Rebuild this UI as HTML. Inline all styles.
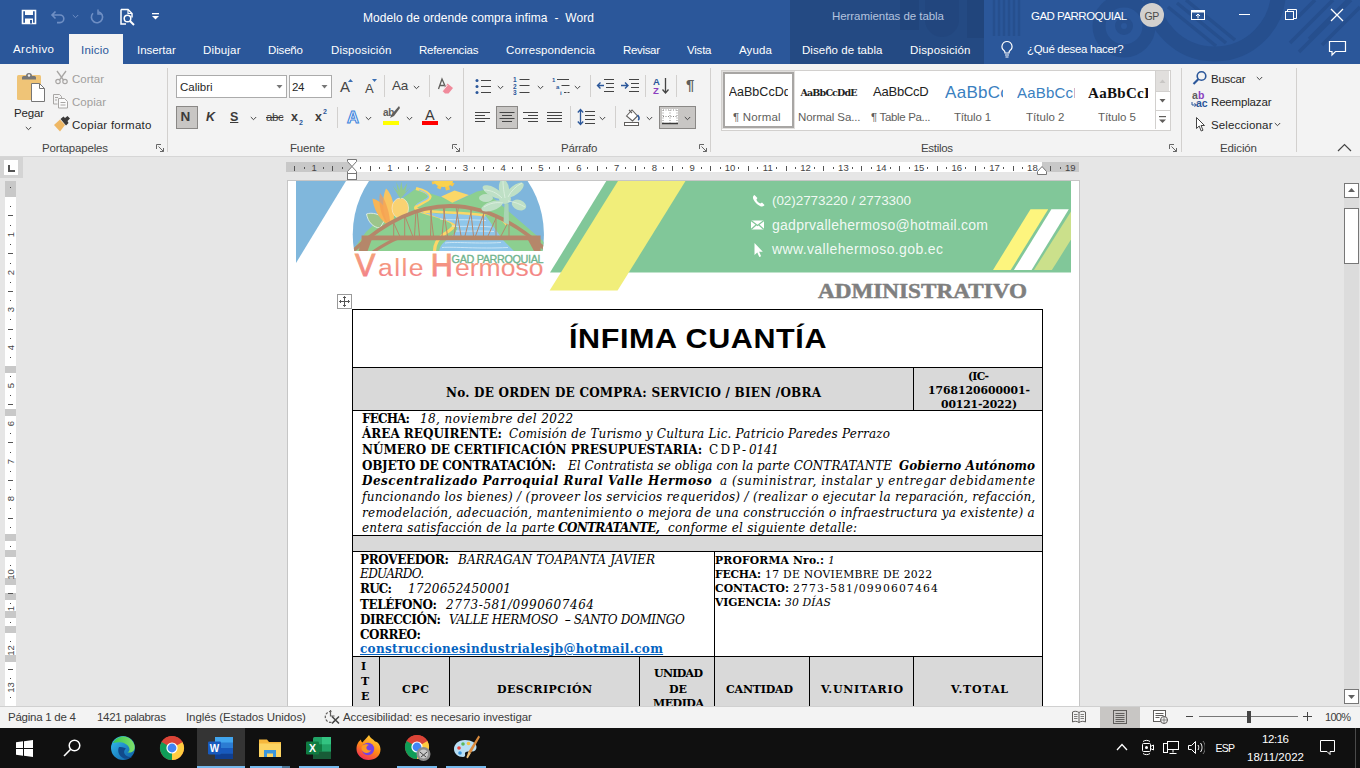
<!DOCTYPE html>
<html lang="es"><head><meta charset="utf-8"><title>Modelo de ordende compra infima - Word</title>
<style>
html,body{margin:0;padding:0;background:#e6e6e6;overflow:hidden}
#app{position:relative;width:1360px;height:768px;overflow:hidden;background:#e6e6e6;font-family:"Liberation Sans",sans-serif;font-size:12px;color:#262626}
#app div,#app span,#app svg{position:absolute;white-space:pre}
.t{line-height:16px;height:16px;font-size:11.5px}
.w{color:#fff}
.g{color:#a19f9d}
.sep{width:1px;background:#d2d0ce}
.chev{width:7px;height:5px}
.doc{font-family:"DejaVu Serif",serif;color:#000}
.doc b{font-weight:bold}
.ln{height:17px;line-height:17px;font-size:12px}
.sm{height:14px;line-height:14px;font-size:10.8px}
.bd{background:#000}
.rn{width:20px;text-align:center;font-size:9.5px;height:10px;line-height:10px;color:#444}
.vn{width:11px;height:11px;line-height:11px;text-align:center;font-size:9.5px;color:#444;transform:rotate(-90deg)}
</style></head><body><div id="app">
<!-- TITLE BAR -->
<div style="left:0;top:0;width:1360px;height:64px;background:#2b579a"></div>
<div style="left:790px;top:0;width:194px;height:64px;background:#244a83"></div>
<svg style="left:790px;top:0" width="570" height="64" viewBox="790 0 570 64">
 <g fill="#21457c"><rect x="900" y="0" width="19" height="30"/><rect x="967" y="0" width="17" height="38"/><path d="M925 0h34v20a17 17 0 0 1-34 0z" opacity=".6"/></g>
 <g stroke="#264f8e" stroke-width="2.500"><path d="M994 0v36M999 0v36M1004 0v36M1009 0v36M1014 0v36M1019 0v36"/></g>
 <g fill="none" stroke="#264f8e"><circle cx="1124" cy="26" r="25" stroke-width="13"/><circle cx="1124" cy="26" r="6" stroke-width="6"/><circle cx="1214.600" cy="-10" r="64" stroke-width="15"/></g>
 <g stroke="#264f8e" stroke-width="3.500"><path d="M1168 7l48 39M1177 3l49 40M1186 0l49 40M1290 43l43-43M1299 52l52-52M1309 39l39-39M1322 45l38-38M1297 18l18-18"/></g>
</svg>
<!-- quick access icons -->
<svg style="left:21px;top:9px" width="16" height="16" viewBox="0 0 16 16"><path d="M1.5 1.5h13v13h-13z" fill="none" stroke="#fff" stroke-width="1.6"/><rect x="4" y="1.5" width="8" height="4.5" fill="#fff"/><rect x="4" y="9.5" width="8" height="5" fill="#fff"/><rect x="9" y="11" width="2" height="3.5" fill="#2b579a"/></svg>
<svg style="left:50px;top:9px" width="16" height="16" viewBox="0 0 16 16"><path d="M5.5 2.5L2 6l3.500 3.500M2.500 6H10a3.800 3.800 0 0 1 0 7.600H7" fill="none" stroke="#6f8fc4" stroke-width="1.6"/></svg>
<svg class="chev" style="left:72px;top:14px" viewBox="0 0 7 5"><path d="M.8 1l2.700 2.700L6.200 1" fill="none" stroke="#6f8fc4" stroke-width="1"/></svg>
<svg style="left:89px;top:9px" width="16" height="16" viewBox="0 0 16 16"><path d="M9.300 2.700A5.600 5.600 0 1 1 4 4.200" fill="none" stroke="#6f8fc4" stroke-width="1.600"/><path d="M9 .5v4.500h4" fill="none" stroke="#6f8fc4" stroke-width="1.500"/></svg>
<svg style="left:119px;top:8px" width="18" height="18" viewBox="0 0 18 18"><path d="M2 1.500h7l4 4v4M2 1.500v14.500h5" fill="none" stroke="#fff" stroke-width="1.500"/><path d="M9 1.500v4h4" fill="none" stroke="#fff" stroke-width="1.200"/><circle cx="8.500" cy="10.500" r="3.300" fill="none" stroke="#fff" stroke-width="1.500"/><path d="M11 13l4 4" stroke="#fff" stroke-width="2"/></svg>
<svg style="left:151px;top:12px" width="9" height="9" viewBox="0 0 9 9"><rect x="1" y="1" width="7" height="1.300" fill="#fff"/><path d="M1 4h7L4.500 7.500z" fill="#fff"/></svg>
<div class="t w" style="left:363px;top:10px;font-size:12px;letter-spacing:0.08px">Modelo de ordende compra infima  -  Word</div>
<div class="t" style="left:832px;top:8px;color:#b4c3de;letter-spacing:-0.06px">Herramientas de tabla</div>
<div class="t w" style="left:1031px;top:8px;letter-spacing:-0.51px">GAD PARROQUIAL</div>
<div style="left:1140px;top:3px;width:24px;height:24px;border-radius:12px;background:#d2d0ce"></div>
<div class="t" style="left:1144.500px;top:7.500px;font-size:10.500px;color:#4a4a4a;letter-spacing:-.3px">GP</div>
<svg style="left:1190px;top:8px" width="16" height="14" viewBox="0 0 16 14"><rect x="1.500" y="2.500" width="13" height="9" fill="none" stroke="#fff" stroke-width="1"/><rect x="1.500" y="2.500" width="13" height="2" fill="#fff"/><path d="M8 10.500V6.500M6 8l2-2 2 2" fill="none" stroke="#fff" stroke-width="1"/></svg>
<div style="left:1239px;top:14px;width:11px;height:1px;background:#fff"></div>
<svg style="left:1285px;top:9px" width="12" height="12" viewBox="0 0 12 12"><rect x=".500" y="2.500" width="8" height="8" fill="none" stroke="#fff"/><path d="M2.500 2.500v-2h9v9h-3" fill="none" stroke="#fff"/></svg>
<svg style="left:1330px;top:8px" width="14" height="14" viewBox="0 0 14 14"><path d="M1 1l12 12M13 1L1 13" stroke="#fff" stroke-width="1.300"/></svg>
<!-- TABS -->
<div style="left:69px;top:34px;width:54px;height:30px;background:#f3f3f3"></div>
<div class="t w" style="left:13px;top:41px;letter-spacing:0.44px">Archivo</div>
<div class="t" style="left:81px;top:42px;color:#2b579a;letter-spacing:0.23px">Inicio</div>
<div class="t w" style="left:137px;top:42px;letter-spacing:-0.04px">Insertar</div>
<div class="t w" style="left:203px;top:42px;letter-spacing:0.18px">Dibujar</div>
<div class="t w" style="left:268px;top:42px;letter-spacing:-0.16px">Diseño</div>
<div class="t w" style="left:331px;top:42px;letter-spacing:0.17px">Disposición</div>
<div class="t w" style="left:419px;top:42px;letter-spacing:-0.19px">Referencias</div>
<div class="t w" style="left:506px;top:42px;letter-spacing:0.10px">Correspondencia</div>
<div class="t w" style="left:623px;top:42px;letter-spacing:-0.33px">Revisar</div>
<div class="t w" style="left:687px;top:42px;letter-spacing:-0.21px">Vista</div>
<div class="t w" style="left:739px;top:42px;letter-spacing:0.15px">Ayuda</div>
<div class="t w" style="left:802px;top:42px;letter-spacing:0.04px">Diseño de tabla</div>
<div class="t w" style="left:910px;top:42px;letter-spacing:0.17px">Disposición</div>
<svg style="left:999px;top:40px" width="16" height="19" viewBox="0 0 16 19"><path d="M8 1.500a5 5 0 0 0-3 9c.700.600 1 1.300 1 2.500h4c0-1.200.300-1.900 1-2.500a5 5 0 0 0-3-9z" fill="none" stroke="#fff" stroke-width="1.200"/><path d="M6 15h4M6.500 17h3" stroke="#fff" stroke-width="1.200"/></svg>
<div class="t w" style="left:1027px;top:41px;letter-spacing:-0.32px">¿Qué desea hacer?</div>
<svg style="left:1328px;top:40px" width="19" height="17" viewBox="0 0 19 17"><path d="M1.500 1.500h16v10h-10l-3.500 3.500v-3.500h-2.500z" fill="none" stroke="#fff" stroke-width="1.200"/></svg>
<!-- RIBBON -->
<div style="left:0;top:64px;width:1360px;height:92px;background:#f3f3f3"></div>
<div style="left:0;top:156px;width:1360px;height:1px;background:#d6d6d6"></div>
<!-- Clipboard -->
<svg style="left:16px;top:70px" width="30" height="34" viewBox="0 0 30 34"><rect x="1" y="5" width="24" height="25" rx="1.500" fill="#efc477"/><path d="M6 9.500V7.500a1.500 1.500 0 0 1 1.500-1.500h2.500a3 3 0 0 1 6 0h2.500a1.500 1.500 0 0 1 1.500 1.500v2z" fill="#767676"/><circle cx="13" cy="5.500" r="1.200" fill="#f3f3f3"/><path d="M15.500 13.500h8l5 5v13h-13z" fill="#fff" stroke="#767676" stroke-width="1"/><path d="M23.500 13.500v5h5" fill="none" stroke="#767676" stroke-width="1"/></svg>
<div class="t" style="left:14px;top:105px;letter-spacing:-0.17px">Pegar</div>
<svg class="chev" style="left:25px;top:126px" viewBox="0 0 7 5"><path d="M.8 1l2.700 2.700L6.200 1" fill="none" stroke="#444" stroke-width="1"/></svg>
<svg style="left:54px;top:70px" width="15" height="15" viewBox="0 0 15 15"><path d="M3 1l6.500 9M12 1L5.500 10" stroke="#a8a6a4" stroke-width="1.300" fill="none"/><circle cx="4" cy="11.500" r="2.200" fill="none" stroke="#a8a6a4" stroke-width="1.200"/><circle cx="11" cy="11.500" r="2.200" fill="none" stroke="#a8a6a4" stroke-width="1.200"/></svg>
<div class="t g" style="left:72px;top:71px;letter-spacing:0.01px">Cortar</div>
<svg style="left:52px;top:93px" width="17" height="16" viewBox="0 0 17 16"><path d="M1.500 1.500h6l2 2v1.500M1.500 1.500v9.500h4" fill="none" stroke="#a8a6a4" stroke-width="1"/><path d="M6.500 5.500h6l3 3v6.500h-9z" fill="#fbfbfb" stroke="#a8a6a4" stroke-width="1"/><path d="M8.500 9.500h5M8.500 12h5M3 4.500h3M3 7h2" stroke="#a8a6a4" stroke-width="1"/></svg>
<div class="t g" style="left:72px;top:94px;letter-spacing:0.02px">Copiar</div>
<svg style="left:53px;top:116px" width="18" height="16" viewBox="0 0 18 16"><path d="M1 9l6-5.500 5 5.500-5 6.500z" fill="#eeb764"/><path d="M7.500 3l3-2.500 1.500 1.500L14.500 0 17 2.500 14.500 5l1 2-2.500 2.500z" fill="#3b3a39"/></svg>
<div class="t" style="left:72px;top:117px;letter-spacing:0.26px">Copiar formato</div>
<div class="t" style="left:42px;top:140px;color:#444;letter-spacing:-0.16px">Portapapeles</div>
<svg style="left:156px;top:144px" width="9" height="9" viewBox="0 0 9 9"><path d="M.5 5V.5H5" fill="none" stroke="#666"/><path d="M2.500 2.500l5 5M7.500 4V7.500H4" fill="none" stroke="#666"/></svg>
<div class="sep" style="left:167px;top:68px;height:84px"></div>
<!-- Font -->
<div class="sep" style="left:337px;top:107px;height:21px"></div>
<div style="left:176px;top:75px;width:109px;height:21px;background:#fff;border:1px solid #ababab"></div>
<div class="t" style="left:180px;top:79px">Calibri</div>
<svg style="left:276px;top:85px" width="7" height="4" viewBox="0 0 7 4"><path d="M.5 0h6L3.500 3.500z" fill="#777"/></svg>
<div style="left:289px;top:75px;width:41px;height:21px;background:#fff;border:1px solid #ababab"></div>
<div class="t" style="left:292px;top:79px;letter-spacing:-.3px">24</div>
<svg style="left:321px;top:85px" width="7" height="4" viewBox="0 0 7 4"><path d="M.5 0h6L3.500 3.500z" fill="#777"/></svg>
<div class="t" style="left:340px;top:79px;font-size:15px;color:#444">A</div>
<svg style="left:348px;top:79px" width="5" height="3" viewBox="0 0 5 3"><path d="M0 3h5L2.500 0z" fill="#3a6fb5"/></svg>
<div class="t" style="left:365px;top:81px;font-size:13px;color:#444">A</div>
<svg style="left:372px;top:79px" width="5" height="3" viewBox="0 0 5 3"><path d="M0 0h5L2.500 3z" fill="#3a6fb5"/></svg>
<div class="sep" style="left:384px;top:75px;height:22px"></div>
<div class="t" style="left:392px;top:78px;font-size:13.500px;color:#444;letter-spacing:-.3px">Aa</div>
<svg class="chev" style="left:413px;top:85px" viewBox="0 0 7 5"><path d="M.8 1l2.700 2.700L6.200 1" fill="none" stroke="#444" stroke-width="1"/></svg>
<div class="sep" style="left:429px;top:75px;height:22px"></div>
<svg style="left:436px;top:77px" width="19" height="18" viewBox="0 0 19 18"><path d="M2.500 12L6 2l3.500 8M3.800 8.500H8" fill="none" stroke="#605e5c" stroke-width="1.300"/><path d="M11.500 6.500l5.500 4.500-4.500 5.500h-3.500l-2.500-2.500z" fill="#f08a9b"/><path d="M6.500 14l5-6" stroke="#fff" stroke-width=".8"/></svg>
<div style="left:176px;top:106px;width:20px;height:21px;background:#c8c6c4;border:1px solid #8a8886"></div>
<div class="t" style="left:180.500px;top:109px;font-weight:bold;font-size:13.500px;color:#3b3a39">N</div>
<div class="t" style="left:206px;top:109px;font-weight:bold;font-style:italic;font-size:12.500px;color:#3b3a39">K</div>
<div class="t" style="left:230px;top:109px;font-weight:bold;font-size:12.500px;color:#3b3a39;text-decoration:underline">S</div>
<svg class="chev" style="left:250px;top:116px" viewBox="0 0 7 5"><path d="M.8 1l2.700 2.700L6.200 1" fill="none" stroke="#444" stroke-width="1"/></svg>
<div class="t" style="left:266px;top:109px;font-size:11.500px;color:#3b3a39;text-decoration:line-through;letter-spacing:-.4px">abc</div>
<div class="t" style="left:291px;top:109px;font-weight:bold;font-size:12.500px;color:#3b3a39">x</div>
<div class="t" style="left:299px;top:115px;font-size:7px;color:#2b579a;font-weight:bold">2</div>
<div class="t" style="left:315px;top:109px;font-weight:bold;font-size:12.500px;color:#3b3a39">x</div>
<div class="t" style="left:323px;top:104px;font-size:7px;color:#2b579a;font-weight:bold">2</div>
<svg style="left:344px;top:107px" width="18" height="20" viewBox="0 0 18 20"><text x="9" y="16" text-anchor="middle" font-family="Liberation Sans,sans-serif" font-size="16.500" font-weight="bold" fill="#fff" stroke="#3f86dd" stroke-width="1.100" y="0">A</text></svg>
<svg class="chev" style="left:365px;top:116px" viewBox="0 0 7 5"><path d="M.8 1l2.700 2.700L6.200 1" fill="none" stroke="#444" stroke-width="1"/></svg>
<div class="t" style="left:383px;top:104.500px;font-size:10px;font-weight:bold;color:#605e5c;letter-spacing:-.3px">ab</div>
<svg style="left:389px;top:106px" width="11" height="13" viewBox="0 0 11 13"><path d="M10 0L3 8l-2 4 4-2 6-8z" fill="#605e5c"/></svg>
<div style="left:383px;top:121px;width:16px;height:4px;background:#ffff00"></div>
<svg class="chev" style="left:406px;top:116px" viewBox="0 0 7 5"><path d="M.8 1l2.700 2.700L6.200 1" fill="none" stroke="#444" stroke-width="1"/></svg>
<div class="t" style="left:425px;top:106.500px;font-size:14.500px;color:#3b3a39">A</div>
<div style="left:422px;top:121px;width:16px;height:4px;background:#ff0000"></div>
<svg class="chev" style="left:445px;top:116px" viewBox="0 0 7 5"><path d="M.8 1l2.700 2.700L6.200 1" fill="none" stroke="#444" stroke-width="1"/></svg>
<div class="t" style="left:290px;top:140px;color:#444;letter-spacing:-0.16px">Fuente</div>
<svg style="left:452px;top:144px" width="9" height="9" viewBox="0 0 9 9"><path d="M.5 5V.5H5" fill="none" stroke="#666"/><path d="M2.500 2.500l5 5M7.500 4V7.500H4" fill="none" stroke="#666"/></svg>
<div class="sep" style="left:463px;top:68px;height:84px"></div>
<!-- Paragraph -->
<svg style="left:475px;top:77px" width="17" height="18" viewBox="0 0 17 18"><g fill="#2b579a"><circle cx="2" cy="3.500" r="1.500"/><circle cx="2" cy="9.500" r="1.500"/><circle cx="2" cy="15.500" r="1.500"/></g><path d="M6 3.500h10M6 9.500h10M6 15.500h10" stroke="#444" stroke-width="1"/></svg>
<svg class="chev" style="left:497px;top:85px" viewBox="0 0 7 5"><path d="M.8 1l2.700 2.700L6.200 1" fill="none" stroke="#444" stroke-width="1"/></svg>
<svg style="left:513px;top:76px" width="18" height="20" viewBox="0 0 18 20"><g font-family="Liberation Sans,sans-serif" font-size="6.500" font-weight="bold" fill="#2b579a"><text x="0" y="6">1</text><text x="0" y="12.500">2</text><text x="0" y="19">3</text></g><path d="M6.500 3.500h10M6.500 9.500h10M6.500 16.500h10" stroke="#444" stroke-width="1"/></svg>
<svg class="chev" style="left:537px;top:85px" viewBox="0 0 7 5"><path d="M.8 1l2.700 2.700L6.200 1" fill="none" stroke="#444" stroke-width="1"/></svg>
<svg style="left:552px;top:76px" width="19" height="20" viewBox="0 0 19 20"><g font-family="Liberation Sans,sans-serif" font-size="6" font-weight="bold" fill="#2b579a"><text x="0" y="6">1</text><text x="4" y="12.500">a</text><text x="8" y="19">i</text></g><path d="M5 3.500h12M9.500 9.500h8M12 16.500h2.500M15.500 16.500h2" stroke="#444" stroke-width="1"/></svg>
<svg class="chev" style="left:574px;top:85px" viewBox="0 0 7 5"><path d="M.8 1l2.700 2.700L6.200 1" fill="none" stroke="#444" stroke-width="1"/></svg>
<div class="sep" style="left:590px;top:75px;height:22px"></div>
<svg style="left:596px;top:78px" width="18" height="16" viewBox="0 0 18 16"><path d="M8 1.500h10M10 5.500h8M10 9.500h8M8 13.500h10" stroke="#444" stroke-width="1"/><path d="M8 7.500H1.500M4.500 4.500l-3 3 3 3" fill="none" stroke="#2b579a" stroke-width="1.400"/></svg>
<svg style="left:621px;top:78px" width="18" height="16" viewBox="0 0 18 16"><path d="M8 1.500h10M10 5.500h8M10 9.500h8M8 13.500h10" stroke="#444" stroke-width="1"/><path d="M0 7.500h7M4 4.500l3 3-3 3" fill="none" stroke="#2b579a" stroke-width="1.400"/></svg>
<div class="sep" style="left:645px;top:75px;height:22px"></div>
<svg style="left:653px;top:76px" width="18" height="20" viewBox="0 0 18 20"><g font-family="Liberation Sans,sans-serif" font-size="9.500" font-weight="bold"><text x="0" y="8.500" fill="#2b579a">A</text><text x="0" y="18" fill="#8b3fc0">Z</text></g><path d="M12.500 2v15M9.500 13.500l3 3.500 3-3.500" fill="none" stroke="#444" stroke-width="1.300"/></svg>
<div class="sep" style="left:676px;top:75px;height:22px"></div>
<div class="t" style="left:686px;top:77px;font-size:15px;color:#605e5c;font-weight:bold">¶</div>
<svg style="left:475px;top:110px" width="16" height="14" viewBox="0 0 16 14"><path d="M0 2.500h15M0 5.500h10M0 8.500h15M0 11.500h10" stroke="#444" stroke-width="1"/></svg>
<div style="left:496px;top:106px;width:20px;height:21px;background:#c8c6c4;border:1px solid #8a8886"></div>
<svg style="left:499px;top:110px" width="16" height="14" viewBox="0 0 16 14"><path d="M.5 2.500h15M3 5.500h10M.5 8.500h15M3 11.500h10" stroke="#444" stroke-width="1"/></svg>
<svg style="left:523px;top:110px" width="16" height="14" viewBox="0 0 16 14"><path d="M0 2.500h15M5 5.500h10M0 8.500h15M5 11.500h10" stroke="#444" stroke-width="1"/></svg>
<svg style="left:547px;top:110px" width="16" height="14" viewBox="0 0 16 14"><path d="M0 2.500h15M0 5.500h15M0 8.500h15M0 11.500h15" stroke="#444" stroke-width="1"/></svg>
<div class="sep" style="left:570px;top:106px;height:22px"></div>
<svg style="left:577px;top:108px" width="18" height="18" viewBox="0 0 18 18"><path d="M8 3.500h10M8 7.500h10M8 11.500h10M8 15.500h10" stroke="#444" stroke-width="1"/><path d="M3.500 1.500v15M.8 4.500l2.700-3 2.700 3M.8 13.500l2.700 3 2.700-3" fill="none" stroke="#2b579a" stroke-width="1.300"/></svg>
<svg class="chev" style="left:599px;top:116px" viewBox="0 0 7 5"><path d="M.8 1l2.700 2.700L6.200 1" fill="none" stroke="#444" stroke-width="1"/></svg>
<div class="sep" style="left:615px;top:106px;height:22px"></div>
<svg style="left:623px;top:107px" width="19" height="20" viewBox="0 0 19 20"><path d="M3.500 9l5.500-6 5.500 6-5 5z" fill="#fff" stroke="#605e5c" stroke-width="1.100"/><path d="M6 3l3 3" stroke="#605e5c" stroke-width="1.100"/><path d="M14.500 8c2 2 2 4.500.500 5" fill="none" stroke="#2b579a" stroke-width="1.600"/><rect x="1.500" y="15.500" width="14" height="3" fill="#fff" stroke="#605e5c" stroke-width="1"/></svg>
<svg class="chev" style="left:646px;top:116px" viewBox="0 0 7 5"><path d="M.8 1l2.700 2.700L6.200 1" fill="none" stroke="#444" stroke-width="1"/></svg>
<div style="left:659px;top:106px;width:35px;height:21px;background:#c8c6c4;border:1px solid #8a8886"></div>
<svg style="left:662px;top:109px" width="16" height="16" viewBox="0 0 16 16"><rect x="0" y="0" width="16" height="14" fill="#fff"/><path d="M1 1h14M1 1v13M15 1v13M8 1v13M1 7.500h14" stroke="#8a8886" stroke-width="1" stroke-dasharray="1 1.500"/><path d="M0 14.500h16" stroke="#3b3a39" stroke-width="1.500"/></svg>
<svg class="chev" style="left:684px;top:116px" viewBox="0 0 7 5"><path d="M.8 1l2.700 2.700L6.200 1" fill="none" stroke="#444" stroke-width="1"/></svg>
<div class="t" style="left:561px;top:140px;color:#444;letter-spacing:-0.20px">Párrafo</div>
<svg style="left:699px;top:144px" width="9" height="9" viewBox="0 0 9 9"><path d="M.5 5V.5H5" fill="none" stroke="#666"/><path d="M2.500 2.500l5 5M7.500 4V7.500H4" fill="none" stroke="#666"/></svg>
<div class="sep" style="left:710px;top:68px;height:84px"></div>
<!-- Styles -->
<div style="left:721px;top:70px;width:448px;height:59px;background:#fff;border:1px solid #d2d0ce"></div>
<div style="left:723px;top:72px;width:67px;height:52px;border:2px solid #a8a6a4;outline:1px solid #e1dfdd"></div>
<div class="t" style="left:728.700px;top:84px;font-size:12.500px;color:#222;width:59px;overflow:hidden;letter-spacing:0.02px">AaBbCcDd</div>
<div class="t doc" style="left:800.500px;top:85px;font-size:9.500px;font-weight:bold;color:#222;letter-spacing:-0.83px">AaBbCcDdE</div>
<div class="t" style="left:873px;top:84px;font-size:13px;color:#222;letter-spacing:-0.23px">AaBbCcD</div>
<div class="t" style="left:945px;top:83px;font-size:17px;color:#3a80c0;width:58px;overflow:hidden;height:20px;line-height:20px;letter-spacing:.3px">AaBbCc</div>
<div class="t" style="left:1017px;top:83px;font-size:15px;color:#3a80c0;width:58px;overflow:hidden;height:20px;line-height:20px;letter-spacing:.2px">AaBbCcD</div>
<div class="t" style="left:1088px;top:83px;font-size:15px;color:#111;font-family:'Liberation Serif',serif;font-weight:bold;width:60px;overflow:hidden;height:20px;line-height:20px;letter-spacing:.3px">AaBbCcI</div>
<div class="t" style="left:733px;top:109px;color:#605e5c;letter-spacing:0.15px">¶ Normal</div>
<div class="t" style="left:798px;top:109px;color:#605e5c;letter-spacing:-0.13px">Normal Sa...</div>
<div class="t" style="left:871px;top:109px;color:#605e5c;letter-spacing:-0.33px">¶ Table Pa...</div>
<div class="t" style="left:954px;top:109px;color:#605e5c;letter-spacing:-0.19px">Título 1</div>
<div class="t" style="left:1026px;top:109px;color:#605e5c;letter-spacing:0.02px">Título 2</div>
<div class="t" style="left:1098px;top:109px;color:#605e5c;letter-spacing:-0.08px">Título 5</div>
<div style="left:1155px;top:71px;width:14px;height:20px;background:#e1dfdd"></div>
<div style="left:1155px;top:71px;width:1px;height:58px;background:#d2d0ce"></div>
<div style="left:1155px;top:91px;width:15px;height:1px;background:#d2d0ce"></div>
<div style="left:1155px;top:110px;width:15px;height:1px;background:#d2d0ce"></div>
<svg style="left:1159px;top:79px" width="7" height="4" viewBox="0 0 7 4"><path d="M.5 4h6L3.500 .500z" fill="#c8c6c4"/></svg>
<svg style="left:1159px;top:99px" width="7" height="4" viewBox="0 0 7 4"><path d="M.5 0h6L3.500 3.500z" fill="#605e5c"/></svg>
<svg style="left:1158px;top:116px" width="9" height="8" viewBox="0 0 9 8"><rect x="1" y="0" width="7" height="1.200" fill="#605e5c"/><path d="M1 3.500h7L4.500 7z" fill="#605e5c"/></svg>
<div class="t" style="left:921px;top:140px;color:#444;letter-spacing:-0.31px">Estilos</div>
<svg style="left:1169px;top:144px" width="9" height="9" viewBox="0 0 9 9"><path d="M.5 5V.5H5" fill="none" stroke="#666"/><path d="M2.500 2.500l5 5M7.500 4V7.500H4" fill="none" stroke="#666"/></svg>
<div class="sep" style="left:1181px;top:68px;height:84px"></div>
<!-- Editing -->
<svg style="left:1192px;top:70px" width="16" height="16" viewBox="0 0 16 16"><circle cx="9.500" cy="6" r="4.300" fill="none" stroke="#2b579a" stroke-width="1.600"/><path d="M6.500 9L1.500 14" stroke="#2b579a" stroke-width="2.200"/></svg>
<div class="t" style="left:1211px;top:71px;letter-spacing:-0.26px">Buscar</div>
<svg class="chev" style="left:1256px;top:76px" viewBox="0 0 7 5"><path d="M.8 1l2.700 2.700L6.200 1" fill="none" stroke="#444" stroke-width="1"/></svg>
<div class="t" style="left:1192px;top:90px;font-size:10.500px;font-weight:bold;color:#605e5c;height:11px;line-height:11px">a</div>
<div class="t" style="left:1198px;top:90px;font-size:10.500px;font-weight:bold;color:#8b3fc0;height:11px;line-height:11px">b</div>
<div class="t" style="left:1196px;top:98px;font-size:10.500px;font-weight:bold;color:#2b579a;height:11px;line-height:11px;letter-spacing:-.2px">ac</div>
<svg style="left:1191px;top:102px" width="6" height="6" viewBox="0 0 6 6"><path d="M1 0v3h4M3.500 1.200l1.800 1.800-1.800 1.800" fill="none" stroke="#2b579a" stroke-width="1"/></svg>
<div class="t" style="left:1211px;top:94px;letter-spacing:-0.17px">Reemplazar</div>
<svg style="left:1195px;top:116px" width="11" height="17" viewBox="0 0 11 17"><path d="M1.500 1.500v11l2.700-2.500 2 5 1.800-.800-2-4.700h3.500z" fill="#fff" stroke="#444" stroke-width="1"/></svg>
<div class="t" style="left:1211px;top:117px;letter-spacing:0.14px">Seleccionar</div>
<svg class="chev" style="left:1274px;top:122px" viewBox="0 0 7 5"><path d="M.8 1l2.700 2.700L6.200 1" fill="none" stroke="#444" stroke-width="1"/></svg>
<div class="t" style="left:1220px;top:140px;color:#444;letter-spacing:-0.12px">Edición</div>
<div class="sep" style="left:1296px;top:68px;height:84px"></div>
<svg style="left:1337px;top:143px" width="15" height="9" viewBox="0 0 15 9"><path d="M1 8l6.500-6.500L14 8" fill="none" stroke="#444" stroke-width="1.200"/></svg>
<!-- RULERS -->
<div style="left:0;top:157px;width:23px;height:21px;background:#d4d4d4"></div>
<div style="left:4px;top:160px;width:14px;height:15px;background:#fff"></div>
<div style="left:8px;top:165px;width:2px;height:6px;background:#555"></div><div style="left:8px;top:170px;width:7px;height:2px;background:#555"></div>
<div style="left:286px;top:162px;width:793px;height:10px;background:#c8c8c8"></div>
<div style="left:352px;top:162px;width:690px;height:10px;background:#fff"></div>
<div style="left:294px;top:166px;width:1px;height:5px;background:#555"></div>
<div style="left:304px;top:167px;width:1px;height:2px;background:#555"></div>
<div class="rn" style="left:304.2px;top:163px">1</div>
<div style="left:323px;top:167px;width:1px;height:2px;background:#555"></div>
<div style="left:332px;top:166px;width:1px;height:5px;background:#555"></div>
<div style="left:342px;top:167px;width:1px;height:2px;background:#555"></div>
<div style="left:360px;top:167px;width:1px;height:2px;background:#555"></div>
<div style="left:370px;top:166px;width:1px;height:5px;background:#555"></div>
<div style="left:379px;top:167px;width:1px;height:2px;background:#555"></div>
<div class="rn" style="left:379.8px;top:163px">1</div>
<div style="left:398px;top:167px;width:1px;height:2px;background:#555"></div>
<div style="left:408px;top:166px;width:1px;height:5px;background:#555"></div>
<div style="left:417px;top:167px;width:1px;height:2px;background:#555"></div>
<div class="rn" style="left:417.6px;top:163px">2</div>
<div style="left:436px;top:167px;width:1px;height:2px;background:#555"></div>
<div style="left:445px;top:166px;width:1px;height:5px;background:#555"></div>
<div style="left:455px;top:167px;width:1px;height:2px;background:#555"></div>
<div class="rn" style="left:455.4px;top:163px">3</div>
<div style="left:474px;top:167px;width:1px;height:2px;background:#555"></div>
<div style="left:483px;top:166px;width:1px;height:5px;background:#555"></div>
<div style="left:493px;top:167px;width:1px;height:2px;background:#555"></div>
<div class="rn" style="left:493.2px;top:163px">4</div>
<div style="left:512px;top:167px;width:1px;height:2px;background:#555"></div>
<div style="left:521px;top:166px;width:1px;height:5px;background:#555"></div>
<div style="left:531px;top:167px;width:1px;height:2px;background:#555"></div>
<div class="rn" style="left:531px;top:163px">5</div>
<div style="left:549px;top:167px;width:1px;height:2px;background:#555"></div>
<div style="left:559px;top:166px;width:1px;height:5px;background:#555"></div>
<div style="left:568px;top:167px;width:1px;height:2px;background:#555"></div>
<div class="rn" style="left:568.8px;top:163px">6</div>
<div style="left:587px;top:167px;width:1px;height:2px;background:#555"></div>
<div style="left:597px;top:166px;width:1px;height:5px;background:#555"></div>
<div style="left:606px;top:167px;width:1px;height:2px;background:#555"></div>
<div class="rn" style="left:606.6px;top:163px">7</div>
<div style="left:625px;top:167px;width:1px;height:2px;background:#555"></div>
<div style="left:635px;top:166px;width:1px;height:5px;background:#555"></div>
<div style="left:644px;top:167px;width:1px;height:2px;background:#555"></div>
<div class="rn" style="left:644.4px;top:163px">8</div>
<div style="left:663px;top:167px;width:1px;height:2px;background:#555"></div>
<div style="left:672px;top:166px;width:1px;height:5px;background:#555"></div>
<div style="left:682px;top:167px;width:1px;height:2px;background:#555"></div>
<div class="rn" style="left:682.2px;top:163px">9</div>
<div style="left:701px;top:167px;width:1px;height:2px;background:#555"></div>
<div style="left:710px;top:166px;width:1px;height:5px;background:#555"></div>
<div style="left:720px;top:167px;width:1px;height:2px;background:#555"></div>
<div class="rn" style="left:720px;top:163px">10</div>
<div style="left:738px;top:167px;width:1px;height:2px;background:#555"></div>
<div style="left:748px;top:166px;width:1px;height:5px;background:#555"></div>
<div style="left:757px;top:167px;width:1px;height:2px;background:#555"></div>
<div class="rn" style="left:757.8px;top:163px">11</div>
<div style="left:776px;top:167px;width:1px;height:2px;background:#555"></div>
<div style="left:786px;top:166px;width:1px;height:5px;background:#555"></div>
<div style="left:795px;top:167px;width:1px;height:2px;background:#555"></div>
<div class="rn" style="left:795.6px;top:163px">12</div>
<div style="left:814px;top:167px;width:1px;height:2px;background:#555"></div>
<div style="left:823px;top:166px;width:1px;height:5px;background:#555"></div>
<div style="left:833px;top:167px;width:1px;height:2px;background:#555"></div>
<div class="rn" style="left:833.4px;top:163px">13</div>
<div style="left:852px;top:167px;width:1px;height:2px;background:#555"></div>
<div style="left:861px;top:166px;width:1px;height:5px;background:#555"></div>
<div style="left:871px;top:167px;width:1px;height:2px;background:#555"></div>
<div class="rn" style="left:871.2px;top:163px">14</div>
<div style="left:890px;top:167px;width:1px;height:2px;background:#555"></div>
<div style="left:899px;top:166px;width:1px;height:5px;background:#555"></div>
<div style="left:909px;top:167px;width:1px;height:2px;background:#555"></div>
<div class="rn" style="left:909px;top:163px">15</div>
<div style="left:927px;top:167px;width:1px;height:2px;background:#555"></div>
<div style="left:937px;top:166px;width:1px;height:5px;background:#555"></div>
<div style="left:946px;top:167px;width:1px;height:2px;background:#555"></div>
<div class="rn" style="left:946.8px;top:163px">16</div>
<div style="left:965px;top:167px;width:1px;height:2px;background:#555"></div>
<div style="left:975px;top:166px;width:1px;height:5px;background:#555"></div>
<div style="left:984px;top:167px;width:1px;height:2px;background:#555"></div>
<div class="rn" style="left:984.6px;top:163px">17</div>
<div style="left:1003px;top:167px;width:1px;height:2px;background:#555"></div>
<div style="left:1013px;top:166px;width:1px;height:5px;background:#555"></div>
<div style="left:1022px;top:167px;width:1px;height:2px;background:#555"></div>
<div class="rn" style="left:1022.4px;top:163px">18</div>
<div style="left:1041px;top:167px;width:1px;height:2px;background:#555"></div>
<div style="left:1050px;top:166px;width:1px;height:5px;background:#555"></div>
<div style="left:1060px;top:167px;width:1px;height:2px;background:#555"></div>
<div class="rn" style="left:1060.2px;top:163px">19</div>
<svg style="left:346px;top:158px" width="12" height="24" viewBox="0 0 12 24"><path d="M1.500 1.500h9v2l-4.500 5-4.500-5z" fill="#fff" stroke="#777" stroke-width="1"/><path d="M1.500 15.500v-2l4.500-5 4.500 5v2z" fill="#fff" stroke="#777" stroke-width="1"/><rect x="1.500" y="15.500" width="9" height="6" fill="#fff" stroke="#777"/></svg>
<svg style="left:1036px;top:162px" width="12" height="14" viewBox="0 0 12 14"><path d="M1.500 12.500v-3l4.500-5 4.500 5v3z" fill="#fff" stroke="#777" stroke-width="1"/></svg>
<div style="left:5px;top:181px;width:11px;height:525px;background:#fff"></div>
<div style="left:5px;top:181px;width:11px;height:16px;background:#c8c8c8"></div>
<div style="left:5px;top:366px;width:11px;height:7px;background:#c8c8c8"></div>
<div style="left:5px;top:409px;width:11px;height:7px;background:#c8c8c8"></div>
<div style="left:5px;top:534px;width:11px;height:7px;background:#c8c8c8"></div>
<div style="left:5px;top:550px;width:11px;height:7px;background:#c8c8c8"></div>
<div style="left:5px;top:578px;width:11px;height:7px;background:#c8c8c8"></div>
<div style="left:5px;top:593px;width:11px;height:7px;background:#c8c8c8"></div>
<div style="left:5px;top:611px;width:11px;height:7px;background:#c8c8c8"></div>
<div style="left:5px;top:626px;width:11px;height:7px;background:#c8c8c8"></div>
<div style="left:5px;top:655px;width:11px;height:7px;background:#c8c8c8"></div>
<div style="left:10px;top:187px;width:1px;height:1px;background:#444"></div>
<div style="left:10px;top:206px;width:1px;height:1px;background:#444"></div>
<div style="left:8px;top:215px;width:5px;height:1px;background:#555"></div>
<div style="left:10px;top:225px;width:1px;height:1px;background:#444"></div>
<div class="vn" style="left:5px;top:228.8px">1</div>
<div style="left:10px;top:244px;width:1px;height:1px;background:#444"></div>
<div style="left:8px;top:253px;width:5px;height:1px;background:#555"></div>
<div style="left:10px;top:263px;width:1px;height:1px;background:#444"></div>
<div class="vn" style="left:5px;top:266.6px">2</div>
<div style="left:10px;top:282px;width:1px;height:1px;background:#444"></div>
<div style="left:8px;top:291px;width:5px;height:1px;background:#555"></div>
<div style="left:10px;top:300px;width:1px;height:1px;background:#444"></div>
<div class="vn" style="left:5px;top:304.4px">3</div>
<div style="left:10px;top:319px;width:1px;height:1px;background:#444"></div>
<div style="left:8px;top:329px;width:5px;height:1px;background:#555"></div>
<div style="left:10px;top:338px;width:1px;height:1px;background:#444"></div>
<div class="vn" style="left:5px;top:342.2px">4</div>
<div style="left:10px;top:357px;width:1px;height:1px;background:#444"></div>
<div style="left:10px;top:376px;width:1px;height:1px;background:#444"></div>
<div class="vn" style="left:5px;top:380px">5</div>
<div style="left:10px;top:395px;width:1px;height:1px;background:#444"></div>
<div style="left:8px;top:404px;width:5px;height:1px;background:#555"></div>
<div class="vn" style="left:5px;top:417.8px">6</div>
<div style="left:10px;top:433px;width:1px;height:1px;background:#444"></div>
<div style="left:8px;top:442px;width:5px;height:1px;background:#555"></div>
<div style="left:10px;top:452px;width:1px;height:1px;background:#444"></div>
<div class="vn" style="left:5px;top:455.6px">7</div>
<div style="left:10px;top:471px;width:1px;height:1px;background:#444"></div>
<div style="left:8px;top:480px;width:5px;height:1px;background:#555"></div>
<div style="left:10px;top:489px;width:1px;height:1px;background:#444"></div>
<div class="vn" style="left:5px;top:493.4px">8</div>
<div style="left:10px;top:508px;width:1px;height:1px;background:#444"></div>
<div style="left:8px;top:518px;width:5px;height:1px;background:#555"></div>
<div style="left:10px;top:527px;width:1px;height:1px;background:#444"></div>
<div style="left:10px;top:546px;width:1px;height:1px;background:#444"></div>
<div style="left:10px;top:565px;width:1px;height:1px;background:#444"></div>
<div class="vn" style="left:5px;top:569px">10</div>
<div style="left:8px;top:593px;width:5px;height:1px;background:#555"></div>
<div style="left:10px;top:603px;width:1px;height:1px;background:#444"></div>
<div class="vn" style="left:5px;top:603.3px">1</div>
<div style="left:10px;top:622px;width:1px;height:1px;background:#444"></div>
<div style="left:10px;top:641px;width:1px;height:1px;background:#444"></div>
<div class="vn" style="left:5px;top:644.6px">12</div>
<div style="left:8px;top:669px;width:5px;height:1px;background:#555"></div>
<div style="left:10px;top:678px;width:1px;height:1px;background:#444"></div>
<div class="vn" style="left:5px;top:682.4px">13</div>
<div style="left:10px;top:697px;width:1px;height:1px;background:#444"></div>
<!-- DOCUMENT -->
<div style="left:287px;top:180px;width:793px;height:527px;background:#c6c6c6"></div>
<div style="left:288px;top:181px;width:791px;height:525px;background:#fff"></div>
<svg style="left:288px;top:181px" width="791" height="125" viewBox="288 181 791 125">
 <defs>
  <clipPath id="dome"><path d="M369 181A95.900 95.900 0 0 0 354.200 251H542.500A95.900 95.900 0 0 0 527.600 181z"/></clipPath>
  <linearGradient id="vh" x1="0" y1="0" x2="0" y2="1"><stop offset="0" stop-color="#f6a878"/><stop offset="1" stop-color="#f27c8c"/></linearGradient>
 </defs>
 <path d="M296 181h50l-50 82z" fill="#80b7dc"/>
 <path d="M606.300 181H1071V272.600H550z" fill="#81c799"/>
 <path d="M618 181h67.500l-67.900 109.600h-68z" fill="#f1ee7a"/>
 <path d="M1030.500 209.200H1048.200L1010.700 270H993z" fill="#fdf57e"/>
 <path d="M1051.400 209.200H1068.800L1031.600 270H1013.900z" fill="#fff"/>
 <path d="M1071 211.500V239.600L1051.900 270H1034z" fill="#cbe08b"/>
 <g clip-path="url(#dome)">
  <rect x="350" y="181" width="200" height="70" fill="#7fb6dc"/>
  <path d="M350 254 366 232 400 200 416 188.500 441 197 455 202 477 191.500 484 190 543 241 550 254z" fill="#8ccf90"/>
  <path d="M441.200 196.600l13.300-6.100 14.400 4.400-16.600 7.800z" fill="#fbd768"/>
  <path d="M443.500 181l-3 8.500-3.500-1.500 2.500-7zM443.500 181l2.500 9.500 4-1-2.500-8.500zM443.500 181l9 5.500 2-3-7-3zM443.500 181l-11 3.500-1-3 8-1z" fill="#f9c74a"/>
  <path d="M434 181a9.500 6 0 0 0 19 0z" fill="#fbd24f"/>
  <path d="M416 188.500c6 1.500 13 4 14 8s-15 8-14.500 11.500 30 9 36 14-3 9-8 12.500-9 8-9 17" fill="none" stroke="#fbd768" stroke-width="3.200"/>
  <path d="M419 190c5 1.500 9 3.500 9.500 6.500s-9 5-12 8.500" fill="none" stroke="#8ec6ea" stroke-width="1.300"/>
  <path d="M421.500 212.500c12 1.500 40 1 64 3l18 25 14 14h-78.500c0-8 3-11 9-15.500s11-8 8.500-13-20-8-35-14.500z" fill="#8ec6ea"/>
  <path d="M423 210.500c14 2.500 40 1.500 62 5" fill="none" stroke="#fbd768" stroke-width="2.500"/>
  <path d="M485 213c10 2 18 6 22 12" fill="none" stroke="#fbd768" stroke-width="2.500"/>
  <path d="M445 243c10-1.500 32 1 56-.500M442 247.500c12-1 36 1.500 66 0M452 226c8 1 24-.500 40 1M456 231c8 .500 22-.500 38 .500M440 219c10 1.500 24 0 46 1.500" stroke="#d8ecf8" stroke-width=".8" fill="none"/>
  <path d="M366.500 214c5-2 14 0 18.500 5.500l-5 8.500c-7-.500-12-6-13.500-14z" fill="#9cc58b" stroke="#eef6ee" stroke-width=".8"/>
  <path d="M372.500 198.500c8 1.500 15 10 19 23l-6 2c-7-6-12-15-13-25z" fill="#f8b556"/>
  <path d="M386 188.500c6 5 9.500 18 7.500 32.500l-6 1.500c-5-9-6-24-1.500-34z" fill="#f9c560"/>
  <path d="M380 193c5 6 9 17 10 28l-4 1.500c-5-8-8-19-6-29.500z" fill="#f59d52" opacity=".7"/>
  <ellipse cx="400.300" cy="208.200" rx="8.300" ry="10.200" fill="#f9d272" stroke="#f6efe0" stroke-width=".6"/>
  <path d="M400.300 199l-7.500-13 5 5.500-1.500-9.500 3.500 8 1.500-8.500 1.500 8.500 4.500-7-2 9 5.500-5z" fill="#92c98e"/>
  <path d="M350 253.800Q450 158.200 550 253.800" fill="none" stroke="#b5876a" stroke-width="3.700"/>
  <path d="M370 254Q386 243 398 238" fill="none" stroke="#b5876a" stroke-width="3"/>
  <path d="M361.600 235.600h179v4.700h-179z" fill="#b5876a"/>
  <path d="M528 240l6 11h6.600v-11z" fill="#b5876a"/>
  <path d="M361.600 240l-3 11h9l4-11z" fill="#b5876a"/>
  <path d="M393.700 223v13M393.700 223l6 13M404.700 215.500v20.500M404.700 215.500l8 20.500M417 210.500l2.500 25.500M416 210.500l-1.500 25.500M430 207.500l3.500 28.500M431.500 207.500l-1 28.500M443 206l4.500 30M445 206l-3 30M456 206.500l5 29.500M458.500 206.500l-4.500 29.500M470.500 208.500l3 27.500M472 208.500l-7 27.500M483.500 211.500v24.500M484.500 211.500l-9 24.500M496 216v20M497 216l-9 20M508 222.500l-7 13.500M509 223v13" stroke="#b5876a" stroke-width="1" fill="none"/>
  <path d="M503.500 222.500l1-19 4 .300.500 21z" fill="#a9d5b4"/>
  <g fill="#bfe0c6"><ellipse cx="492" cy="206" rx="11" ry="4.500" transform="rotate(-18 492 206)"/><ellipse cx="493" cy="192" rx="11.500" ry="4.500" transform="rotate(28 493 192)"/><ellipse cx="504" cy="189" rx="5" ry="9.500" transform="rotate(-8 504 189)"/><ellipse cx="515" cy="190" rx="10.500" ry="4.500" transform="rotate(-38 515 190)"/><ellipse cx="519" cy="205" rx="7.500" ry="5" transform="rotate(22 519 205)"/><ellipse cx="486" cy="198" rx="7" ry="4"/><ellipse cx="505" cy="199" rx="6" ry="5"/></g>
  <g stroke="#e4f3e7" stroke-width=".7" fill="none"><path d="M484 207c6-4 12-5 19-4M484 190c7 0 13 3 18 8M503 181c0 6 1 11 2 17M522 183c-6 3-11 8-14 14M525 207c-5-3-10-5-17-6"/></g>
 </g>
 <g font-family="Liberation Sans,sans-serif" fill="url(#vh)">
 <text x="355" y="276" font-size="30.500" stroke="url(#vh)" stroke-width=".9">V</text>
 <text transform="translate(378 276) scale(1.13 1)" font-size="23.500" textLength="40.300" lengthAdjust="spacing">alle</text>
 <text x="430.800" y="276" font-size="30.500" stroke="url(#vh)" stroke-width=".9">H</text>
 <text transform="translate(455 276) scale(1.13 1)" font-size="23.500" textLength="78.300" lengthAdjust="spacing">ermoso</text>
 </g>
 <text x="451.600" y="263" font-family="Liberation Sans,sans-serif" font-size="10.800" fill="#6fb48e" stroke="#6fb48e" stroke-width=".35" textLength="92" lengthAdjust="spacing">GAD PARROQUIAL</text>
 <path d="M754.500 195c-1.500 1-2 2.500-1 4.500 1.500 3 3.500 5 6.500 6.500 2 1 3.500.500 4.500-1l-2.500-2.500-1.800 1c-1.800-.800-3-2-3.800-3.800l1-1.800z" fill="#fff"/>
 <path d="M751 220.500h13v9h-13z" fill="#fff"/><path d="M751 220.500l6.500 5 6.500-5M751 229.500l5-4.500M764 229.500l-5-4.500" stroke="#81c799" stroke-width="1.200" fill="none"/>
 <path d="M754.500 243v12l2.800-2.500 2 4.500 1.800-.800-2-4.400h3.700z" fill="#fff"/>
 <g font-family="Liberation Sans,sans-serif" fill="#fff" fill-opacity=".9" font-size="13.500"><text x="772" y="205" textLength="139" lengthAdjust="spacing">(02)2773220 / 2773300</text><text x="772" y="229.500" textLength="216" lengthAdjust="spacing" font-size="14">gadprvallehermoso@hotmail.com</text><text x="772" y="253.500" textLength="171" lengthAdjust="spacing" font-size="14">www.vallehermoso.gob.ec</text></g>
 <text x="818" y="297.500" font-family="Liberation Serif,serif" font-weight="bold" font-size="20.800" fill="#7f7f7f" stroke="#7f7f7f" stroke-width=".5" textLength="209" lengthAdjust="spacingAndGlyphs">ADMINISTRATIVO</text>
</svg>
<!-- table move handle -->
<div style="left:337px;top:294px;width:13px;height:13px;background:#fff;border:1px solid #9a9a9a"></div>
<svg style="left:339px;top:296px" width="11" height="11" viewBox="0 0 11 11"><path d="M5.500 .500v10M.500 5.500h10" stroke="#555" stroke-width="1"/><path d="M4 2l1.500-1.500L7 2M4 9l1.500 1.500L7 9M2 4L.500 5.500 2 7M9 4l1.500 1.500L9 7" fill="none" stroke="#555" stroke-width="1"/></svg>
<!-- table backgrounds -->
<div style="left:352px;top:367px;width:690px;height:43px;background:#d9d9d9"></div>
<div style="left:352px;top:535px;width:690px;height:16px;background:#d9d9d9"></div>
<div style="left:352px;top:656px;width:690px;height:50px;background:#d9d9d9"></div>
<!-- table borders -->
<div class="bd" style="left:352px;top:309px;width:691px;height:1px"></div>
<div class="bd" style="left:352px;top:367px;width:691px;height:1px"></div>
<div class="bd" style="left:352px;top:410px;width:691px;height:1px"></div>
<div class="bd" style="left:352px;top:535px;width:691px;height:1px"></div>
<div class="bd" style="left:352px;top:551px;width:691px;height:1px"></div>
<div class="bd" style="left:352px;top:656px;width:691px;height:1px"></div>
<div class="bd" style="left:352px;top:309px;width:1px;height:397px"></div>
<div class="bd" style="left:1042px;top:309px;width:1px;height:397px"></div>
<div class="bd" style="left:913px;top:367px;width:1px;height:43px"></div>
<div class="bd" style="left:714px;top:551px;width:1px;height:155px"></div>
<div class="bd" style="left:379px;top:656px;width:1px;height:50px"></div>
<div class="bd" style="left:449px;top:656px;width:1px;height:50px"></div>
<div class="bd" style="left:639px;top:656px;width:1px;height:50px"></div>
<div class="bd" style="left:809px;top:656px;width:1px;height:50px"></div>
<div class="bd" style="left:913px;top:656px;width:1px;height:50px"></div>
<!-- table text -->
<div style="left:569px;top:321px;height:36px;line-height:36px;font-size:28px;font-weight:bold;color:#000;transform-origin:0 0;transform:scaleX(1.09);letter-spacing:0.54px">ÍNFIMA CUANTÍA</div>
<div class="doc ln" style="left:446px;top:384.6px;font-weight:bold;letter-spacing:0.23px">No. DE ORDEN DE COMPRA: SERVICIO / BIEN /OBRA</div>
<div class="doc sm" style="left:968px;top:369.500px;font-weight:bold;letter-spacing:-0.74px">(IC-</div>
<div class="doc sm" style="left:928px;top:383.500px;font-weight:bold;letter-spacing:-0.01px">1768120600001-</div>
<div class="doc sm" style="left:941px;top:398px;font-weight:bold;letter-spacing:-0.12px">00121-2022)</div>
<!-- row 3 -->
<div class="doc ln" style="left:362px;top:410.500px;letter-spacing:-0.86px"><b>FECHA:</b></div>
<div class="doc ln" style="left:420px;top:410.500px;letter-spacing:0.42px"><i>18, noviembre del 2022</i></div>
<div class="doc ln" style="left:362px;top:426px;letter-spacing:-0.01px"><b>ÁREA REQUIRENTE:</b></div>
<div class="doc ln" style="left:509px;top:426px;letter-spacing:0.20px"><i>Comisión de Turismo y Cultura Lic. Patricio Paredes Perrazo</i></div>
<div class="doc ln" style="left:362px;top:441.500px;letter-spacing:-0.01px"><b>NÚMERO DE CERTIFICACIÓN PRESUPUESTARIA:</b></div>
<div class="doc ln" style="left:709px;top:441.500px;letter-spacing:2.24px">CDP-</div>
<div class="doc ln" style="left:749px;top:441.500px;letter-spacing:-0.18px"><i>0141</i></div>
<div class="doc ln" style="left:362px;top:457.500px;letter-spacing:-0.25px"><b>OBJETO DE CONTRATACIÓN:</b></div>
<div class="doc ln" style="left:568px;top:457.500px;letter-spacing:0.05px"><i>El Contratista se obliga con la parte CONTRATANTE</i></div>
<div class="doc ln" style="left:899px;top:457.500px;letter-spacing:0.06px"><b><i>Gobierno Autónomo</i></b></div>
<div class="doc ln" style="left:362px;top:473px;letter-spacing:0.51px"><b><i>Descentralizado Parroquial Rural Valle Hermoso</i></b></div>
<div class="doc ln" style="left:720px;top:473px;letter-spacing:0.56px"><i>a (suministrar, instalar y entregar debidamente</i></div>
<div class="doc ln" style="left:362px;top:488.500px;letter-spacing:0.29px"><i>funcionando los bienes) / (proveer los servicios requeridos) / (realizar o ejecutar la reparación, refacción,</i></div>
<div class="doc ln" style="left:362px;top:504.500px;letter-spacing:0.29px"><i>remodelación, adecuación, mantenimiento o mejora de una construcción o infraestructura ya existente) a</i></div>
<div class="doc ln" style="left:362px;top:520px;letter-spacing:0.26px"><i>entera satisfacción de la parte</i></div>
<div class="doc ln" style="left:558px;top:520px;letter-spacing:-0.67px"><b><i>CONTRATANTE,</i></b></div>
<div class="doc ln" style="left:668px;top:520px;letter-spacing:0.26px"><i>conforme el siguiente detalle:</i></div>
<!-- row 5 left -->
<div class="doc ln" style="left:360px;top:552.2px;letter-spacing:-0.35px"><b>PROVEEDOR:</b></div>
<div class="doc ln" style="left:458px;top:552.2px;letter-spacing:0.16px"><i>BARRAGAN TOAPANTA JAVIER</i></div>
<div class="doc ln" style="left:360px;top:566px;letter-spacing:-0.63px"><i>EDUARDO.</i></div>
<div class="doc ln" style="left:360px;top:581.3px;letter-spacing:-0.81px"><b>RUC:</b></div>
<div class="doc ln" style="left:408px;top:581.3px;letter-spacing:0.31px"><i>1720652450001</i></div>
<div class="doc ln" style="left:360px;top:596.5px;letter-spacing:-0.44px"><b>TELÉFONO:</b></div>
<div class="doc ln" style="left:446px;top:596.5px;letter-spacing:0.56px"><i>2773-581/0990607464</i></div>
<div class="doc ln" style="left:360px;top:611.5px;letter-spacing:-0.48px"><b>DIRECCIÓN:</b></div>
<div class="doc ln" style="left:449px;top:611.5px;letter-spacing:-0.36px"><i>VALLE HERMOSO  – SANTO DOMINGO</i></div>
<div class="doc ln" style="left:360px;top:627px;letter-spacing:-0.50px"><b>CORREO:</b></div>
<div class="doc ln" style="left:360px;top:641px;color:#0563c1;text-decoration:underline;letter-spacing:0.31px"><b>construccionesindustrialesjb@hotmail.com</b></div>
<!-- row 5 right -->
<div class="doc sm" style="left:715px;top:554.3px;letter-spacing:0.16px"><b>PROFORMA Nro.:</b></div>
<div class="doc sm" style="left:828px;top:554.3px"><i>1</i></div>
<div class="doc sm" style="left:715px;top:568.3px;letter-spacing:-0.21px"><b>FECHA:</b></div>
<div class="doc sm" style="left:765px;top:568.3px;letter-spacing:0.27px">17 DE NOVIEMBRE DE 2022</div>
<div class="doc sm" style="left:715px;top:582.3px;letter-spacing:0.04px"><b>CONTACTO:</b></div>
<div class="doc sm" style="left:793px;top:582.3px;letter-spacing:1.16px">2773-581/0990607464</div>
<div class="doc sm" style="left:715px;top:596.3px;letter-spacing:-0.10px"><b>VIGENCIA:</b></div>
<div class="doc sm" style="left:785px;top:596.3px;letter-spacing:0.12px"><i>30 DÍAS</i></div>
<!-- row 6 header -->
<div class="doc ln" style="font-size:11px;left:361px;top:657.8px"><b>I</b></div>
<div class="doc ln" style="font-size:11px;left:361px;top:672.8px"><b>T</b></div>
<div class="doc ln" style="font-size:11px;left:361px;top:687.8px"><b>E</b></div>
<div class="doc ln" style="font-size:11px;left:402px;top:681.3px;letter-spacing:0.61px"><b>CPC</b></div>
<div class="doc ln" style="font-size:11px;left:497px;top:681.3px;letter-spacing:0.43px"><b>DESCRIPCIÓN</b></div>
<div class="doc ln" style="font-size:11px;left:654px;top:664.8px;letter-spacing:-0.68px"><b>UNIDAD</b></div>
<div class="doc ln" style="font-size:11px;left:669px;top:681.3px;letter-spacing:0.06px"><b>DE</b></div>
<div class="doc ln" style="font-size:11px;left:653px;top:694.8px;letter-spacing:-0.47px"><b>MEDIDA</b></div>
<div class="doc ln" style="font-size:11px;left:726px;top:681.3px;letter-spacing:-0.19px"><b>CANTIDAD</b></div>
<div class="doc ln" style="font-size:11px;left:821px;top:681.3px;letter-spacing:0.75px"><b>V.UNITARIO</b></div>
<div class="doc ln" style="font-size:11px;left:951px;top:681.3px;letter-spacing:0.82px"><b>V.TOTAL</b></div>
<!-- area below doc clipped by status bar -->
<!-- scrollbar -->
<div style="left:1344px;top:183px;width:15px;height:521px;background:#dcdcdc"></div>
<div style="left:1344px;top:183px;width:15px;height:15px;background:#fff;border:1px solid #777;box-sizing:border-box"></div>
<svg style="left:1348px;top:188px" width="7" height="4" viewBox="0 0 7 4"><path d="M0 4h7L3.500 0z" fill="#606060"/></svg>
<div style="left:1344px;top:208px;width:15px;height:56px;background:#fff;border:1px solid #777;box-sizing:border-box"></div>
<div style="left:1344px;top:689px;width:15px;height:15px;background:#fff;border:1px solid #777;box-sizing:border-box"></div>
<svg style="left:1348px;top:695px" width="7" height="4" viewBox="0 0 7 4"><path d="M0 0h7L3.500 4z" fill="#606060"/></svg>
<!-- STATUS BAR -->
<div style="left:0;top:706px;width:1360px;height:22px;background:#f3f3f3"></div>
<div style="left:0;top:706px;width:1360px;height:1px;background:#d0d0d0"></div>
<div class="t" style="left:8px;top:709px;color:#3b3b3b;letter-spacing:-0.25px">Página 1 de 4</div>
<div class="t" style="left:97px;top:709px;color:#3b3b3b;letter-spacing:-0.33px">1421 palabras</div>
<div class="t" style="left:186px;top:709px;color:#3b3b3b;letter-spacing:-0.10px">Inglés (Estados Unidos)</div>
<svg style="left:323px;top:709px" width="17" height="16" viewBox="0 0 17 16"><path d="M8.500 2.500a5.500 5.500 0 1 0 3 9.500" fill="none" stroke="#605e5c" stroke-width="1.200" stroke-dasharray="2.500 1.500"/><path d="M7.500 1v6h4" fill="none" stroke="#605e5c" stroke-width="1.200"/><path d="M9 7.500l7 7M16 7.500l-7 7" stroke="#444" stroke-width="1.500"/></svg>
<div class="t" style="left:343px;top:709px;color:#3b3b3b;letter-spacing:-0.06px">Accesibilidad: es necesario investigar</div>
<svg style="left:1071px;top:710px" width="16" height="14" viewBox="0 0 16 14"><path d="M8 2.500c-2-1.500-4.500-1.500-6.500-.500v10c2-1 4.500-1 6.500.500 2-1.500 4.500-1.500 6.500-.500v-10c-2-1-4.500-1-6.500.500zM8 2.500v10" fill="none" stroke="#605e5c" stroke-width="1"/><path d="M3 4.500h3.500M3 6.500h3.500M3 8.500h3.500M9.500 4.500h3.500M9.500 6.500h3.500M9.500 8.500h3.500" stroke="#605e5c" stroke-width=".8"/></svg>
<div style="left:1100px;top:707px;width:40px;height:21px;background:#c8c6c4"></div>
<svg style="left:1112px;top:710px" width="16" height="14" viewBox="0 0 16 14"><rect x="1.500" y=".500" width="13" height="13" fill="none" stroke="#605e5c" stroke-width="1"/><path d="M3.500 3.500h9M3.500 5.500h9M3.500 7.500h9M3.500 9.500h9M3.500 11.500h9" stroke="#605e5c" stroke-width="1"/></svg>
<svg style="left:1152px;top:709px" width="17" height="16" viewBox="0 0 17 16"><rect x="1.500" y="1.500" width="12" height="11" fill="#fff" stroke="#605e5c" stroke-width="1"/><path d="M3.500 4.500h8M3.500 6.500h8M3.500 8.500h4" stroke="#605e5c" stroke-width="1"/><circle cx="12" cy="11" r="3.500" fill="#f3f3f3" stroke="#605e5c" stroke-width="1"/><path d="M8.500 11h7M12 7.500v7" stroke="#605e5c" stroke-width=".7"/></svg>
<div style="left:1186px;top:716px;width:7px;height:1px;background:#444"></div>
<div style="left:1199px;top:716px;width:99px;height:1px;background:#777"></div>
<div style="left:1247px;top:711px;width:4px;height:12px;background:#444"></div>
<div style="left:1303px;top:716px;width:9px;height:1px;background:#444"></div>
<div style="left:1307px;top:712px;width:1px;height:9px;background:#444"></div>
<div class="t" style="left:1325px;top:709px;color:#3b3b3b;font-size:11px;letter-spacing:-0.71px">100%</div>
<!-- TASKBAR -->
<div style="left:0;top:728px;width:1360px;height:40px;background:#101010"></div>
<div style="left:197px;top:728px;width:48px;height:40px;background:#343434"></div>
<svg style="left:16px;top:740px" width="17" height="17" viewBox="0 0 17 17"><path d="M0 2.300L7 1.300V8H0zM8 1.200L17 0V8H8zM0 9H7v6.700L0 14.700zM8 9h9v8L8 15.800z" fill="#fff"/></svg>
<svg style="left:62px;top:738px" width="20" height="20" viewBox="0 0 20 20"><circle cx="12.500" cy="7.500" r="5.300" fill="none" stroke="#fff" stroke-width="1.500"/><path d="M8.700 11.300L2 18" stroke="#fff" stroke-width="1.600"/></svg>
<!-- Edge -->
<svg style="left:110px;top:735px" width="26" height="26" viewBox="0 0 26 26"><defs><linearGradient id="eg1" x1="0" y1="0" x2="1" y2="1"><stop offset="0" stop-color="#35c1f1"/><stop offset="1" stop-color="#0c59a4"/></linearGradient><linearGradient id="eg2" x1="0" y1="0" x2="1" y2="0"><stop offset="0" stop-color="#36c752"/><stop offset="1" stop-color="#7fe06b"/></linearGradient></defs><circle cx="13" cy="13" r="12" fill="url(#eg1)"/><path d="M3 8C6 2 13 0 18 2.500 23 5 25.500 10 24.500 14c-1 3-4 4-7 3.500 2-1 2.500-3 1.500-5C17 8 11 6 3 8z" fill="url(#eg2)"/><path d="M9 12c-2 4 0 9 4 11 3 1.500 7 1 9.500-1.500-3 1-6 0-7.500-2-1.500-2-1-4.500 1-6-2-1.500-5.500-1.500-7-1.500z" fill="#114a8b"/></svg>
<!-- Chrome -->
<svg style="left:159px;top:735px" width="26" height="26" viewBox="0 0 26 26"><circle cx="13" cy="13" r="12" fill="#db4437"/><path d="M13 13L2.600 7A12 12 0 0 0 13 25z" fill="#0f9d58"/><path d="M13 13l0 12A12 12 0 0 0 23.400 7z" fill="#ffcd40"/><path d="M13 13L23.400 7H13z" fill="#db4437"/><path d="M2.600 7A12 12 0 0 1 23.400 7H13z" fill="#db4437"/><circle cx="13" cy="13" r="5.600" fill="#fff"/><circle cx="13" cy="13" r="4.400" fill="#4285f4"/></svg>
<!-- Word -->
<svg style="left:208px;top:736px" width="26" height="24" viewBox="0 0 26 24"><rect x="7" y="1" width="18" height="22" rx="1.500" fill="#2b7cd3"/><rect x="7" y="1" width="18" height="5.500" fill="#41a5ee"/><rect x="7" y="12" width="18" height="5.500" fill="#185abd"/><rect x="7" y="17.500" width="18" height="5.500" fill="#103f91"/><rect x="0" y="5.500" width="13" height="13" rx="1.200" fill="#185abd"/><text x="6.500" y="16" text-anchor="middle" font-family="Liberation Sans,sans-serif" font-weight="bold" font-size="10" fill="#fff">W</text></svg>
<!-- Explorer -->
<svg style="left:258px;top:737px" width="24" height="22" viewBox="0 0 24 22"><path d="M1 2.500h8l2 2.500h12v15H1z" fill="#f6b73c"/><path d="M1 6.500h22v13.500H1z" fill="#fcd462"/><path d="M6 13h12v7H6z" fill="#3a96dd"/><path d="M9 16.500h6v3.500H9z" fill="#fcd462"/></svg>
<!-- Excel -->
<svg style="left:306px;top:736px" width="26" height="24" viewBox="0 0 26 24"><rect x="7" y="1" width="18" height="22" rx="1.500" fill="#21a366"/><rect x="16" y="1" width="9" height="7.300" fill="#33c481"/><rect x="7" y="8.300" width="9" height="7.300" fill="#107c41"/><rect x="7" y="15.600" width="18" height="7.400" fill="#185c37"/><rect x="0" y="5.500" width="13" height="13" rx="1.200" fill="#107c41"/><text x="6.500" y="16" text-anchor="middle" font-family="Liberation Sans,sans-serif" font-weight="bold" font-size="10.500" fill="#fff">X</text></svg>
<!-- Firefox -->
<svg style="left:355px;top:734px" width="27" height="27" viewBox="0 0 27 27"><defs><linearGradient id="fg" x1="0.700" y1="0" x2="0.200" y2="1"><stop offset="0" stop-color="#ffd43a"/><stop offset=".5" stop-color="#ff8a16"/><stop offset="1" stop-color="#f0235f"/></linearGradient></defs><path d="M14 1c1 3 4 4 6 6.500 3 0 5.500 4 5.500 8C25.500 22 20 26 13.500 26S1.500 21 1.500 15C1.500 10 4 7 6 5.500c0 1.500.500 2.500 1.500 3C9 6 12 4 14 1z" fill="url(#fg)"/><circle cx="13" cy="15" r="6.200" fill="#7542e5"/><path d="M7 12c2-2 5-2.500 7-1-2 .5-3 2-2.500 3.500S14 17 16 16c-1 3-5 4-7.500 2S6 14 7 12z" fill="#ff9a1f"/></svg>
<!-- Chrome w/ avatar -->
<svg style="left:404px;top:734px" width="28" height="28" viewBox="0 0 28 28"><circle cx="13" cy="13" r="12" fill="#db4437"/><path d="M13 13L2.600 7A12 12 0 0 0 13 25z" fill="#0f9d58"/><path d="M13 13l0 12A12 12 0 0 0 23.400 7z" fill="#ffcd40"/><path d="M2.600 7A12 12 0 0 1 23.400 7H13z" fill="#db4437"/><circle cx="13" cy="13" r="5.600" fill="#fff"/><circle cx="13" cy="13" r="4.400" fill="#4285f4"/><circle cx="19.500" cy="20" r="7" fill="#8d8d8d"/><circle cx="19.500" cy="20" r="4.500" fill="#c9c9c9"/><path d="M16 18l3.500 3 3.500-3M17 23l2.500-2 2.500 2" stroke="#444" stroke-width="1" fill="none"/></svg>
<!-- Paint -->
<svg style="left:453px;top:734px" width="28" height="28" viewBox="0 0 28 28"><path d="M12 6C5 6 1 10.500 1 15s4 8 9 8c2 0 2.500-1.500 2-3s1-2.500 3-2.500h4c3 0 4.500-2 4.500-4.500C23.500 9 18.500 6 12 6z" fill="#b8dff5"/><circle cx="6" cy="14" r="1.800" fill="#e8443a"/><circle cx="10" cy="10" r="1.800" fill="#5cb85c"/><circle cx="15.500" cy="9.500" r="1.800" fill="#f5c242"/><circle cx="7" cy="19" r="1.800" fill="#3a96dd"/><path d="M25.500 1.500l1.500 1.500-9 16-2.500-1.500z" fill="#d98a3d"/><path d="M15.500 17.500l2.500 1.500-3 5c-1 .5-1.500 0-1.500-1z" fill="#f0c27a"/></svg>
<!-- underlines -->
<div style="left:197px;top:766px;width:48px;height:2px;background:#76b9ed"></div>
<div style="left:250px;top:766px;width:32px;height:2px;background:#76b9ed"></div>
<div style="left:282px;top:766px;width:8px;height:2px;background:#4a7596"></div>
<div style="left:299px;top:766px;width:40px;height:2px;background:#76b9ed"></div>
<div style="left:397px;top:766px;width:40px;height:2px;background:#76b9ed"></div>
<div style="left:446px;top:766px;width:40px;height:2px;background:#76b9ed"></div>
<div style="left:1355px;top:728px;width:1px;height:40px;background:#4a4a4a"></div>
<!-- tray -->
<svg style="left:1116px;top:743px" width="12" height="8" viewBox="0 0 12 8"><path d="M1 7l5-5.500L11 7" fill="none" stroke="#fff" stroke-width="1.300"/></svg>
<svg style="left:1140px;top:739px" width="15" height="17" viewBox="0 0 15 17"><rect x="2.500" y="4.500" width="8" height="8" rx="1" fill="none" stroke="#fff" stroke-width="1"/><path d="M10.500 7.500l3-1.500v5l-3-1.500" fill="none" stroke="#fff" stroke-width="1"/><path d="M3 2.500c2-1.500 5-1.500 7 0M3 14.500c2 1.500 5 1.500 7 0" fill="none" stroke="#fff" stroke-width="1"/><circle cx="6.500" cy="8.500" r="1.500" fill="#fff"/></svg>
<svg style="left:1162px;top:740px" width="18" height="16" viewBox="0 0 18 16"><rect x="5.500" y="1.500" width="11" height="8" fill="none" stroke="#fff" stroke-width="1"/><path d="M11 9.500v3M7.500 13.500h7" stroke="#fff" stroke-width="1"/><rect x="1.500" y="3.500" width="4" height="9" fill="#101010" stroke="#fff" stroke-width="1"/></svg>
<svg style="left:1187px;top:740px" width="18" height="15" viewBox="0 0 18 15"><path d="M1.500 5.500h3l4-4v12l-4-4h-3z" fill="none" stroke="#fff" stroke-width="1"/><path d="M11 5c1 1.500 1 3.500 0 5M13.500 3c2 2.500 2 6.500 0 9" fill="none" stroke="#fff" stroke-width="1"/><path d="M16 1c3 4 3 9 0 13" fill="none" stroke="#777" stroke-width="1"/></svg>
<div class="t w" style="left:1215.5px;top:740px;font-size:10.5px;letter-spacing:-0.76px">ESP</div>
<div class="t w" style="left:1262px;top:731px;font-size:11.500px;letter-spacing:-0.45px">12:16</div>
<div class="t w" style="left:1247px;top:749px;font-size:11.500px;letter-spacing:0.03px">18/11/2022</div>
<svg style="left:1319px;top:739px" width="17" height="17" viewBox="0 0 17 17"><path d="M1.500 1.500h14v11h-4.500v3l-3-3h-6.500z" fill="none" stroke="#fff" stroke-width="1"/></svg>
</div></body></html>
